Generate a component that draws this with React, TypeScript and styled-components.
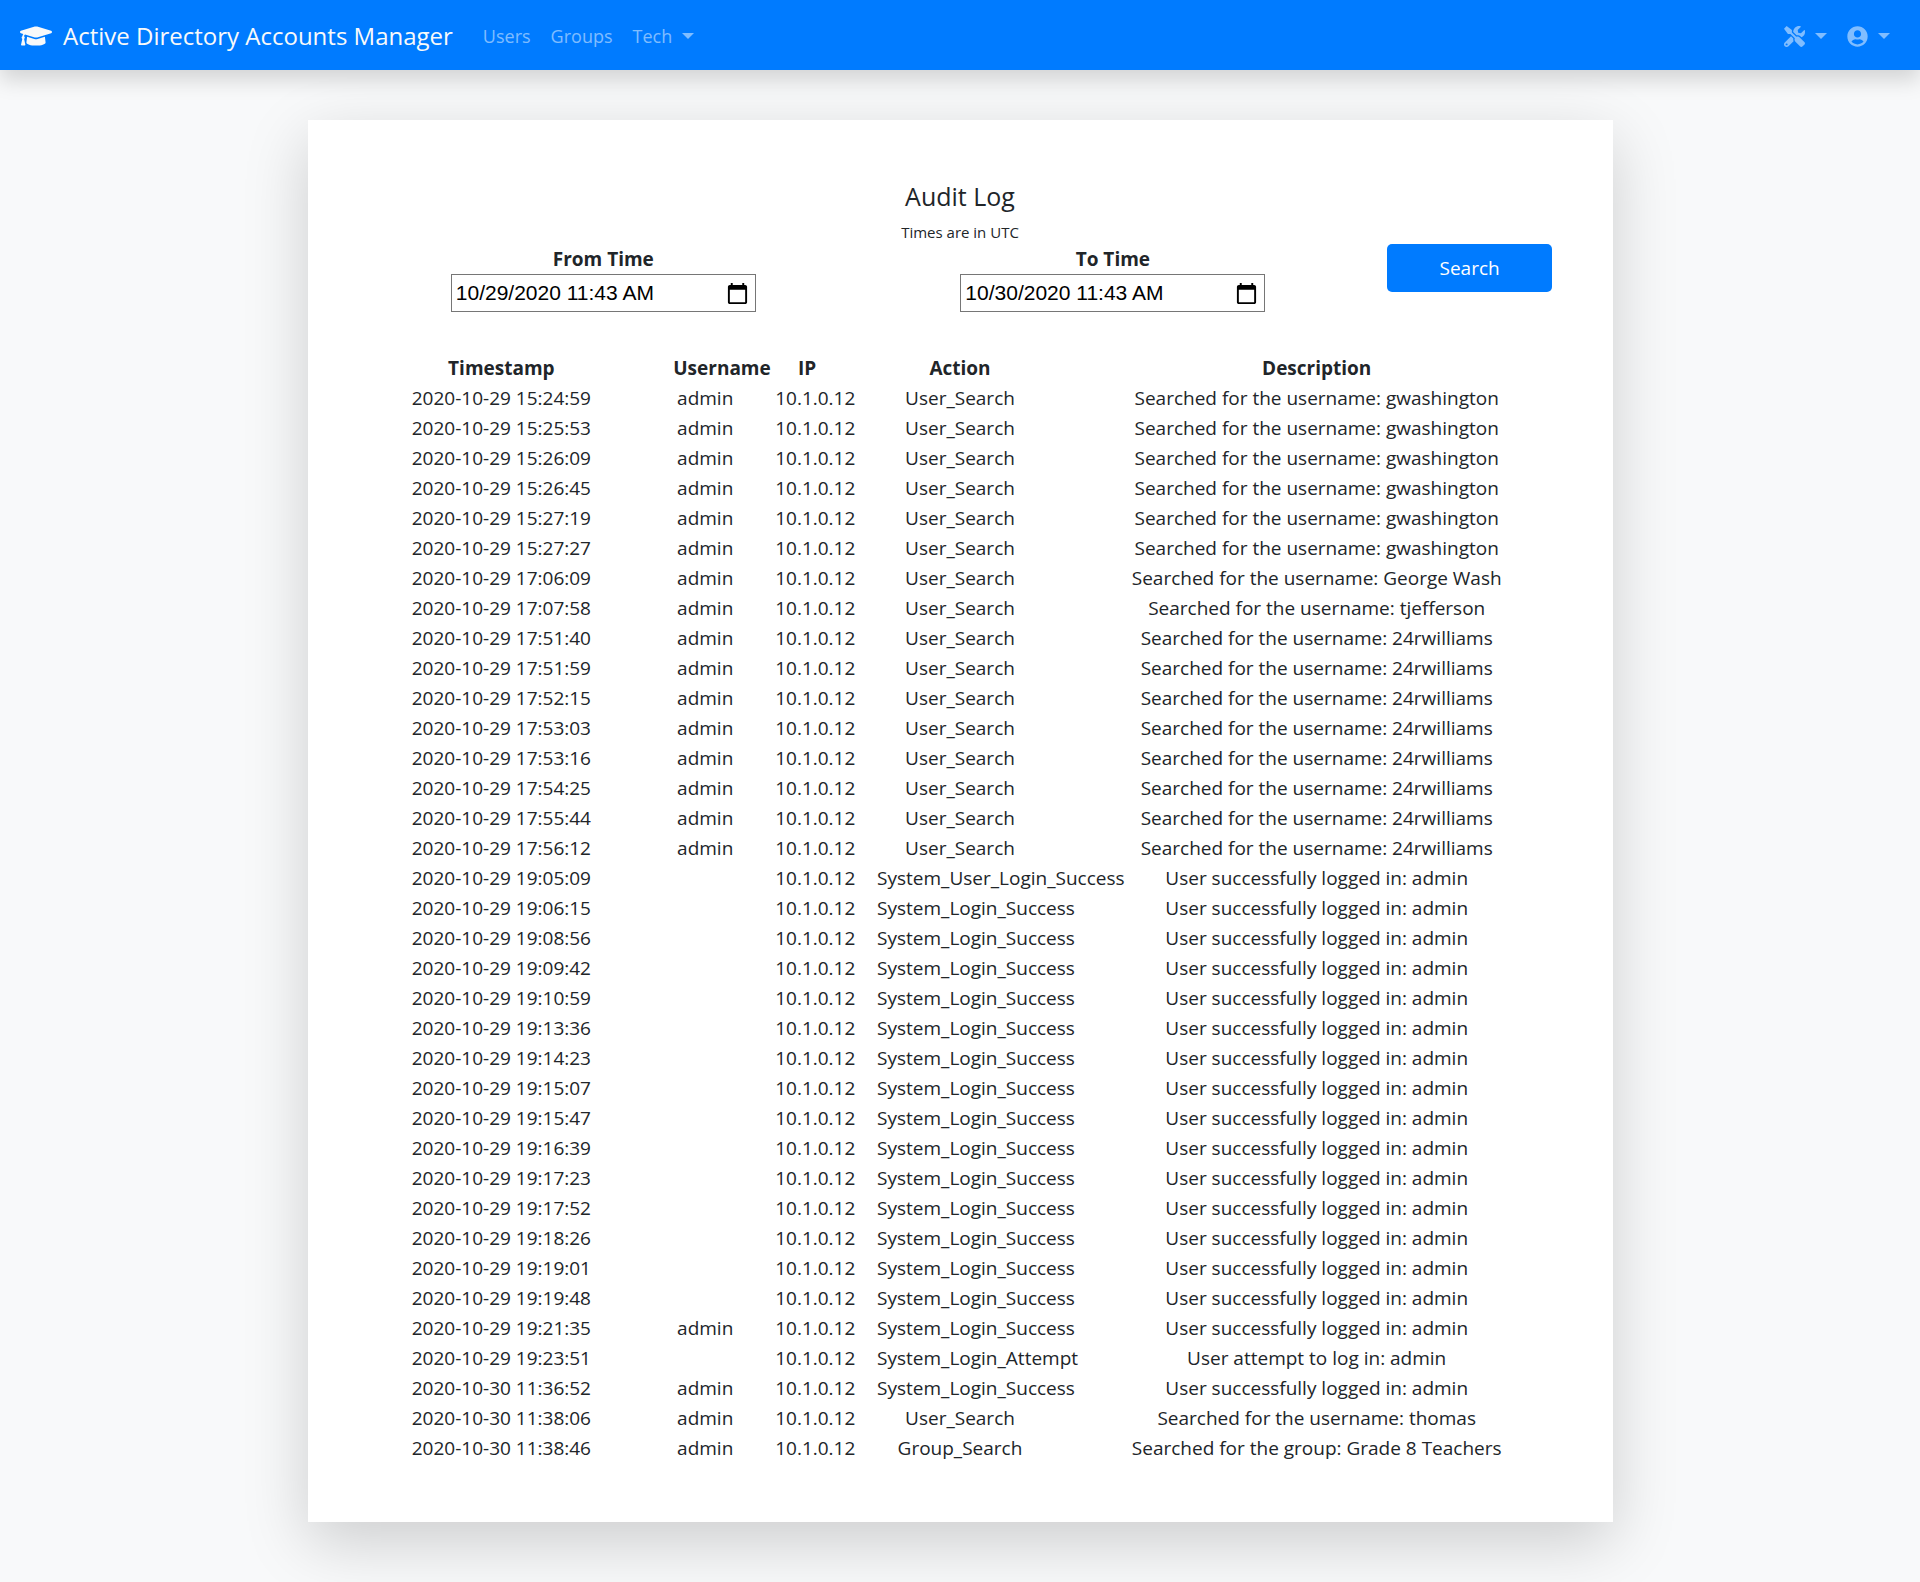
import React from "react";
import styled, { createGlobalStyle } from "styled-components";
import { FaGraduationCap, FaTools, FaUserCircle } from "react-icons/fa";
import { MdCalendarToday } from "react-icons/md";

const GlobalStyle = createGlobalStyle`
  *, *::before, *::after { box-sizing: border-box; }
  body {
    margin: 0;
    background: #f8f9fa;
    color: #212529;
    font-family: "Segoe UI", "Open Sans", "Noto Sans", sans-serif;
    font-size: 19px;
    line-height: 30px;
  }
`;

const Navbar = styled.nav`
  display: flex;
  align-items: center;
  height: 70px;
  padding: 2px 20px 0;
  background: #007bff;
  box-shadow: 0 10px 20px rgba(0, 0, 0, 0.15);
`;

const Brand = styled.a`
  display: flex;
  align-items: center;
  gap: 11px;
  margin-right: 20px;
  color: #f8f9fa;
  font-size: 24px;
  text-decoration: none;
  white-space: nowrap;
`;

const NavGroup = styled.div`
  display: flex;
  align-items: center;
  font-size: 18px;

  &:last-child {
    margin-left: auto;
  }
`;

const NavLink = styled.a`
  display: flex;
  align-items: center;
  padding: 10px;
  color: rgba(255, 255, 255, 0.5);
  text-decoration: none;
`;

const NavToggle = styled.button`
  display: flex;
  align-items: center;
  gap: 10px;
  padding: 10px;
  border: 0;
  background: none;
  color: rgba(255, 255, 255, 0.5);
  font: inherit;
  cursor: pointer;

  &::after {
    content: "";
    border: 6px solid transparent;
    border-top-color: currentColor;
    border-bottom: 0;
  }
`;

const Page = styled.div`
  padding: 50px 20px 60px;
`;

const Card = styled.main`
  max-width: 1305px;
  margin: 0 auto;
  padding: 60px 60px 59px;
  background: #fff;
  box-shadow: 0 20px 60px rgba(0, 0, 0, 0.175);
  text-align: center;
`;

const Title = styled.h1`
  margin: 0 0 8px;
  font-size: 25px;
  font-weight: 500;
  line-height: 32px;
`;

const Note = styled.p`
  margin: 0;
  font-size: 15px;
  line-height: 24px;
`;

const Filters = styled.form`
  display: grid;
  grid-template-columns: 5fr 5fr 2fr;
  align-items: start;
  margin: 0 -19px 41px;
`;

const Field = styled.div`
  display: flex;
  flex-direction: column;
  align-items: center;
  padding: 0 19px;
`;

const Label = styled.label`
  font-weight: 700;
`;

const DateBox = styled.div`
  display: flex;
  align-items: center;
  width: 305px;
  max-width: 100%;
  height: 38px;
  padding: 0 6px 0 4px;
  border: 1px solid #767676;
  background: #fff;
`;

const DateInput = styled.input`
  flex: 1;
  min-width: 0;
  padding: 0;
  border: 0;
  background: none;
  color: #000;
  font-family: Arial, "Liberation Sans", sans-serif;
  font-size: 21px;
`;

const PickerButton = styled.button`
  display: flex;
  padding: 0;
  border: 0;
  background: none;
  color: #000;
  cursor: pointer;
`;

const SearchButton = styled.button`
  height: 48px;
  margin: 0 19px;
  border: 0;
  border-radius: 5px;
  background: #007bff;
  color: #fff;
  font: inherit;
  cursor: pointer;
`;

const LogTable = styled.table`
  width: calc(100% + 38px);
  margin: 0 -19px;
  border-collapse: collapse;
  table-layout: fixed;
`;

const Column = styled.col<{ $span: number }>`
  width: calc(100% * ${(p) => p.$span} / 12);
`;

const HeadCell = styled.th`
  height: 30px;
  padding: 0 19px;
  white-space: nowrap;
`;

const Cell = styled.td`
  height: 30px;
  padding: 0 19px;
  white-space: nowrap;
`;

type Entry = { time: string; user: string; action: string; description: string };

const entry = (time: string, user: string, action: string, description: string): Entry => ({
  time,
  user,
  action,
  description,
});

const search = (time: string, name: string) =>
  entry(time, "admin", "User_Search", `Searched for the username: ${name}`);

const login = (time: string, user = "", action = "System_Login_Success") =>
  entry(time, user, action, "User successfully logged in: admin");

const entries: Entry[] = [
  search("2020-10-29 15:24:59", "gwashington"),
  search("2020-10-29 15:25:53", "gwashington"),
  search("2020-10-29 15:26:09", "gwashington"),
  search("2020-10-29 15:26:45", "gwashington"),
  search("2020-10-29 15:27:19", "gwashington"),
  search("2020-10-29 15:27:27", "gwashington"),
  search("2020-10-29 17:06:09", "George Wash"),
  search("2020-10-29 17:07:58", "tjefferson"),
  search("2020-10-29 17:51:40", "24rwilliams"),
  search("2020-10-29 17:51:59", "24rwilliams"),
  search("2020-10-29 17:52:15", "24rwilliams"),
  search("2020-10-29 17:53:03", "24rwilliams"),
  search("2020-10-29 17:53:16", "24rwilliams"),
  search("2020-10-29 17:54:25", "24rwilliams"),
  search("2020-10-29 17:55:44", "24rwilliams"),
  search("2020-10-29 17:56:12", "24rwilliams"),
  login("2020-10-29 19:05:09", "", "System_User_Login_Success"),
  login("2020-10-29 19:06:15"),
  login("2020-10-29 19:08:56"),
  login("2020-10-29 19:09:42"),
  login("2020-10-29 19:10:59"),
  login("2020-10-29 19:13:36"),
  login("2020-10-29 19:14:23"),
  login("2020-10-29 19:15:07"),
  login("2020-10-29 19:15:47"),
  login("2020-10-29 19:16:39"),
  login("2020-10-29 19:17:23"),
  login("2020-10-29 19:17:52"),
  login("2020-10-29 19:18:26"),
  login("2020-10-29 19:19:01"),
  login("2020-10-29 19:19:48"),
  login("2020-10-29 19:21:35", "admin"),
  entry("2020-10-29 19:23:51", "", "System_Login_Attempt", "User attempt to log in: admin"),
  login("2020-10-30 11:36:52", "admin"),
  search("2020-10-30 11:38:06", "thomas"),
  entry("2020-10-30 11:38:46", "admin", "Group_Search", "Searched for the group: Grade 8 Teachers"),
];

const columns = [
  { name: "Timestamp", span: 3 },
  { name: "Username", span: 1 },
  { name: "IP", span: 1 },
  { name: "Action", span: 2 },
  { name: "Description", span: 5 },
];

function TimeField({ id, label, value }: { id: string; label: string; value: string }) {
  return (
    <Field>
      <Label htmlFor={id}>{label}</Label>
      <DateBox>
        <DateInput id={id} type="text" defaultValue={value} />
        <PickerButton type="button" aria-label={`Pick ${label}`}>
          <MdCalendarToday size={23} />
        </PickerButton>
      </DateBox>
    </Field>
  );
}

export default function App() {
  return (
    <>
      <GlobalStyle />
      <Navbar>
        <Brand href="#">
          <FaGraduationCap size={32} />
          Active Directory Accounts Manager
        </Brand>
        <NavGroup>
          <NavLink href="#users">Users</NavLink>
          <NavLink href="#groups">Groups</NavLink>
          <NavToggle type="button">Tech</NavToggle>
        </NavGroup>
        <NavGroup>
          <NavToggle type="button" aria-label="Tools">
            <FaTools size={21} />
          </NavToggle>
          <NavToggle type="button" aria-label="Account">
            <FaUserCircle size={21} />
          </NavToggle>
        </NavGroup>
      </Navbar>
      <Page>
        <Card>
          <Title>Audit Log</Title>
          <Note>Times are in UTC</Note>
          <Filters onSubmit={(e) => e.preventDefault()}>
            <TimeField id="from" label="From Time" value="10/29/2020 11:43 AM" />
            <TimeField id="to" label="To Time" value="10/30/2020 11:43 AM" />
            <SearchButton type="submit">Search</SearchButton>
          </Filters>
          <LogTable>
            <colgroup>
              {columns.map((c) => (
                <Column key={c.name} $span={c.span} />
              ))}
            </colgroup>
            <thead>
              <tr>
                {columns.map((c) => (
                  <HeadCell key={c.name} scope="col">
                    {c.name}
                  </HeadCell>
                ))}
              </tr>
            </thead>
            <tbody>
              {entries.map((e) => (
                <tr key={e.time}>
                  <Cell>{e.time}</Cell>
                  <Cell>{e.user}</Cell>
                  <Cell>10.1.0.12</Cell>
                  <Cell>{e.action}</Cell>
                  <Cell>{e.description}</Cell>
                </tr>
              ))}
            </tbody>
          </LogTable>
        </Card>
      </Page>
    </>
  );
}
